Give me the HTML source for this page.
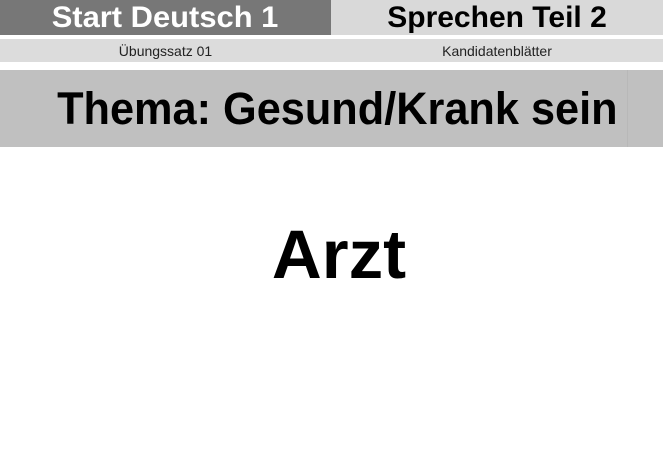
<!DOCTYPE html>
<html><head><meta charset="utf-8"><style>
html,body{margin:0;padding:0;width:663px;height:462px;background:#fff;overflow:hidden;font-family:"Liberation Sans",Arial,sans-serif}
.a{position:absolute}
.c{display:flex;align-items:center;justify-content:center}
</style></head><body>
<div class="a c" style="left:0;top:0;width:331px;height:35px;background:#777;color:#fff;font-weight:bold;font-size:30px"><span style="display:inline-block;transform:scaleX(1.03)">Start Deutsch 1</span></div>
<div class="a c" style="left:331px;top:0;width:332px;height:35px;background:#d9d9d9;color:#000;font-weight:bold;font-size:30px">Sprechen Teil 2</div>
<div class="a c" style="left:0;top:39px;width:331px;height:23px;background:#dcdcdc;font-size:14px;color:#222">Übungssatz 01</div>
<div class="a c" style="left:331px;top:39px;width:332px;height:23px;background:#dcdcdc;font-size:14px;color:#222">Kandidatenblätter</div>
<div class="a" style="left:0;top:70px;width:663px;height:77px;background:#c0c0c0"></div>
<div class="a" style="left:627px;top:70px;width:1px;height:77px;background:#b8b8b8"></div>
<div class="a c" style="left:0;top:73px;width:674px;height:72px;font-weight:bold;font-size:45px;color:#000"><span style="display:inline-block;transform:scaleX(0.962)">Thema: Gesund/Krank sein</span></div>
<div class="a c" style="left:0;top:209px;width:678px;height:90px;font-weight:bold;font-size:69px;color:#000">Arzt</div>
</body></html>
